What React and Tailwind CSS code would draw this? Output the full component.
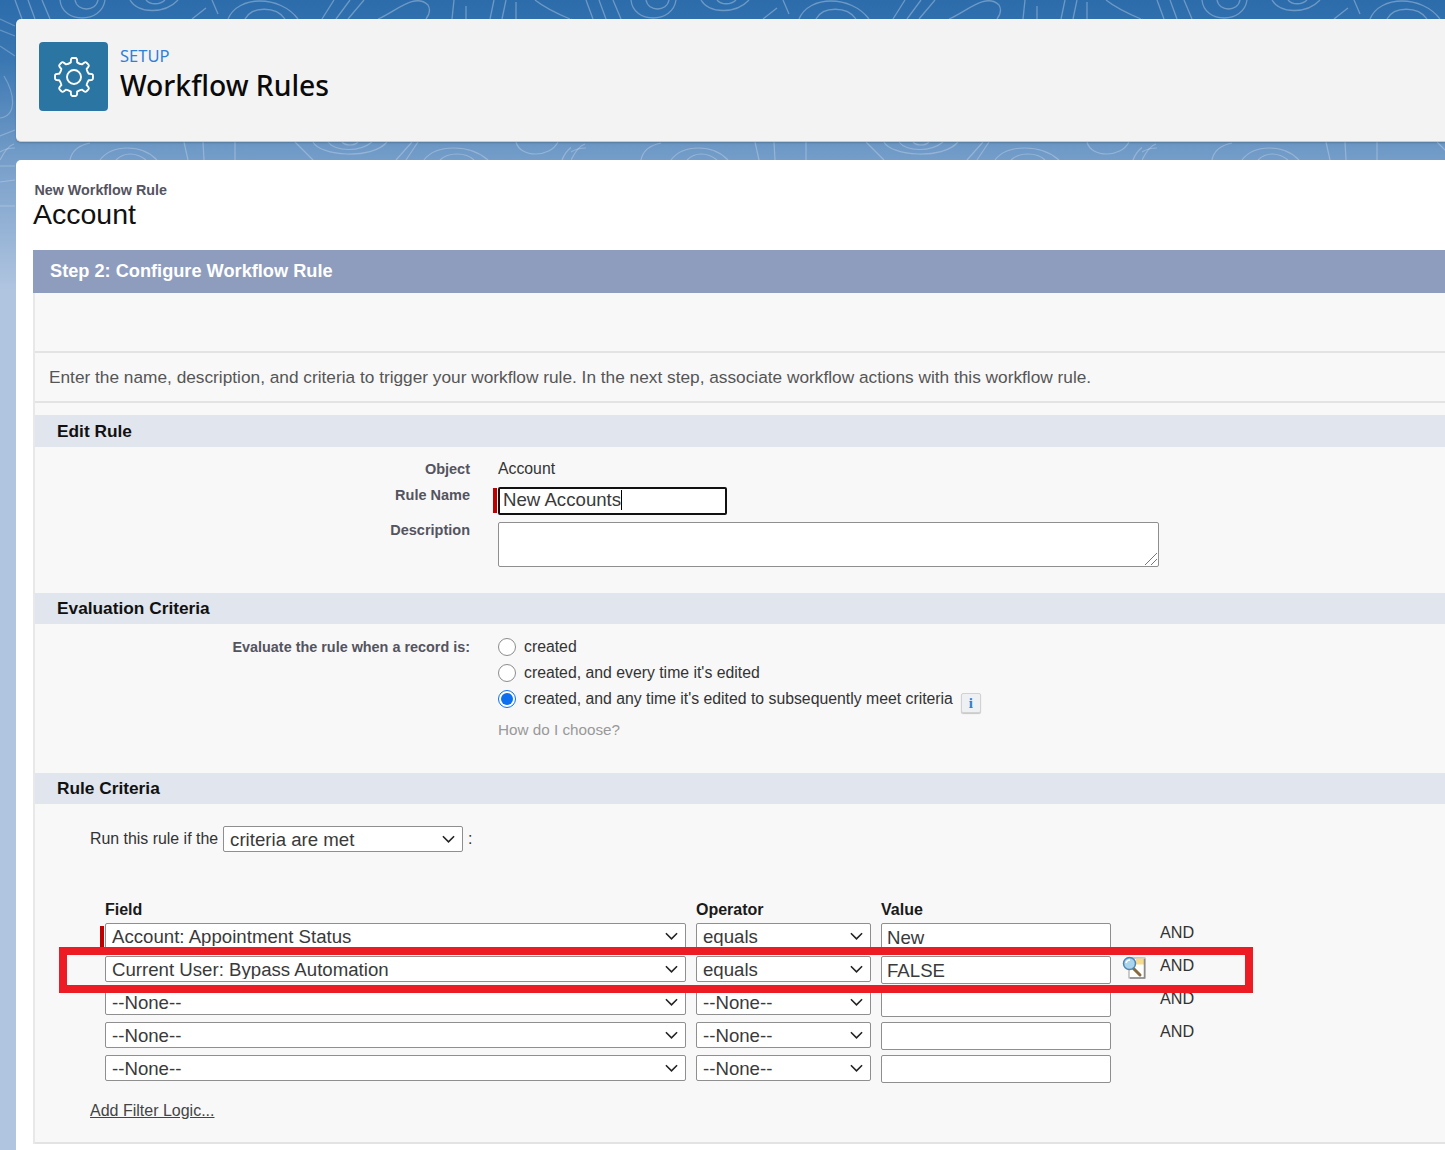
import React from "react";

const arial = "font-['Liberation_Sans',Arial,sans-serif]";

function Swirl() {
  return (
    <svg className="absolute inset-0 h-full w-full" aria-hidden="true">
      <defs>
        <pattern id="swirl" width="571" height="1200" patternUnits="userSpaceOnUse">
          <g fill="none" stroke="#ffffff" strokeOpacity="0.3" strokeWidth="1.3">
            <path d="M15 0 L22 19 M28 0 L35 19 M42 0 L50 19" />
            <path d="M60 0 C62 24 102 24 105 0 M75 0 C77 12 96 12 98 0" />
            <path d="M130 0 C138 14 165 14 178 0 M146 0 C150 5 160 5 165 0" />
            <path d="M192 19 L206 8 M212 0 L218 14" />
            <path d="M228 19 C238 -5 280 -5 298 19 M245 19 C252 6 276 6 285 19" />
            <path d="M322 19 L334 0 M336 19 L350 0 M348 19 L364 0" />
            <path d="M378 19 C395 12 415 -8 428 5 C431 10 429 15 426 19" />
            <path d="M452 19 L454 0 M466 19 L466 6 M490 19 L494 0 M502 19 L506 0 M516 19 L516 2" />
            <path d="M535 0 C545 8 558 14 570 19" />
          </g>
          <g transform="translate(0 142)" fill="none" stroke="#ffffff" strokeOpacity="0.25" strokeWidth="1.2">
            <path d="M70 18 C72 8 80 3 90 1" />
            <path d="M100 18 C112 2 142 2 157 18 M116 18 C124 10 136 10 146 18" />
            <path d="M184 0 L188 18 M203 0 L204 18 M235 0 L235 18" />
            <path d="M295 0 L313 18" />
            <path d="M313 0 C320 14 372 18 387 0 M328 0 C336 10 360 10 372 0 M342 0 C346 4 354 4 358 0" />
            <path d="M396 18 L412 0 M406 18 L418 0" />
            <path d="M424 18 C436 2 470 2 488 18 M440 18 C448 10 466 10 474 18" />
            <path d="M516 0 C520 16 550 16 558 0" />
            <path d="M562 18 C566 8 572 3 580 2" />
            <path d="M0 18 C4 10 8 4 14 2" />
          </g>
          <g fill="none" stroke="#ffffff" strokeOpacity="0.24" strokeWidth="1.2">
            <path d="M0 19 L15 26 M0 30 L15 36 M0 46 L15 56 M4 76 C16 96 16 116 0 118 M0 136 L15 130 M0 152 C6 148 12 148 15 148 M0 166 L15 166 M0 182 L15 180 M0 206 L15 206" />
          </g>
        </pattern>
      </defs>
      <rect width="100%" height="100%" fill="url(#swirl)" />
    </svg>
  );
}

function gearPath() {
  const cx = 22;
  const cy = 22;
  const rOut = 19;
  const rIn = 15;
  const teeth = 8;
  const pts = [];
  for (let i = 0; i < teeth; i++) {
    const a = (i * 2 * Math.PI) / teeth - Math.PI / 2;
    const s = (2 * Math.PI) / teeth;
    const p = (r, o) => `${(cx + r * Math.cos(a + o)).toFixed(2)} ${(cy + r * Math.sin(a + o)).toFixed(2)}`;
    const cmd = i === 0 ? "M" : "L";
    pts.push(`${cmd}${p(rIn, -s * 0.27)}`);
    pts.push(`Q${p(rOut + 0.6, -s * 0.22)} ${p(rOut, -s * 0.08)}`);
    pts.push(`L${p(rOut, s * 0.08)}`);
    pts.push(`Q${p(rOut + 0.6, s * 0.22)} ${p(rIn, s * 0.27)}`);
    pts.push(`Q${p(rIn - 0.8, s * 0.5)} ${p(rIn, s * 0.73)}`);
  }
  return pts.join(" ") + " Z";
}

function Gear() {
  return (
    <svg viewBox="0 0 44 44" className="h-[44px] w-[44px]" fill="none" stroke="#ffffff" strokeWidth="1.9" strokeLinejoin="round" strokeLinecap="round">
      <circle cx="22" cy="22" r="7" />
      <path d={gearPath()} />
    </svg>
  );
}

function Lookup() {
  return (
    <svg viewBox="0 0 24 24" className="h-[24px] w-[24px]">
      <rect x="7" y="3" width="16" height="20" fill="#ffffff" stroke="#9a9a9a" />
      <rect x="14" y="3.5" width="8.5" height="6" fill="#f6dc8c" />
      <path d="M22.5 4 V23 H8" fill="none" stroke="#8a8a8a" strokeWidth="1.5" />
      <path d="M11 13 L18 20" stroke="#8a6a3c" strokeWidth="3" strokeLinecap="round" />
      <circle cx="7.5" cy="8.5" r="6" fill="#a9d4ee" stroke="#4d86b5" strokeWidth="1.5" />
      <path d="M4 8 C4.5 6 6 5 8 5" stroke="#ffffff" strokeWidth="1.5" fill="none" />
    </svg>
  );
}

function Select({ value, className }) {
  return (
    <div className={`relative ${className}`}>
      <select
        defaultValue={value}
        className={`h-full w-full appearance-none rounded-[2px] border border-[#8f8f8f] bg-white pl-[6px] pt-[2px] text-[18.65px] leading-none text-[#3a3a3a] ${arial}`}
      >
        <option>{value}</option>
      </select>
      <svg viewBox="0 0 14 8" className="pointer-events-none absolute right-[8px] top-[9px] h-[8px] w-[13px]" fill="none" stroke="#222222" strokeWidth="1.7">
        <path d="M1 1 L7 7 L13 1" />
      </svg>
    </div>
  );
}

function Radio({ checked }) {
  return (
    <span className={`flex h-[18px] w-[18px] shrink-0 items-center justify-center rounded-full border bg-white ${checked ? "border-[#0b6ff0]" : "border-[#8c8c8c]"}`}>
      {checked && <span className="h-[12px] w-[12px] rounded-full bg-[#0b6ff0]" />}
    </span>
  );
}

function Section({ children, tall }) {
  return (
    <div className={`flex items-center bg-[#e1e5ee] pl-[22px] text-[17.3px] font-bold text-[#111111] ${tall ? "h-[32px] pt-[1px]" : "h-[31px]"} ${arial}`}>
      {children}
    </div>
  );
}

function Row({ field, op, value, required, lookup, and, mt }) {
  return (
    <div className={`relative flex items-start ${mt}`}>
      {required && <span className="absolute left-[-5px] top-[3px] h-[22px] w-[4px] bg-[#c00000]" />}
      <Select value={field} className="h-[26px] w-[581px]" />
      <Select value={op} className="ml-[10px] h-[26px] w-[175px]" />
      <input
        readOnly
        value={value}
        className={`ml-[10px] h-[28px] w-[230px] rounded-[2px] border border-[#8f8f8f] bg-white px-[5px] pt-[2px] text-[18.65px] leading-none text-[#3a3a3a] ${arial}`}
      />
      <span className="ml-[11px] mt-[-1px] w-[25px]">{lookup && <Lookup />}</span>
      {and && <span className={`ml-[13px] mt-[-3px] text-[16.2px] leading-[24px] text-[#333333] ${arial}`}>AND</span>}
    </div>
  );
}

export default function App() {
  return (
    <div className="relative h-[1150px] overflow-hidden bg-[linear-gradient(180deg,#2c6cab_0px,#3a77b2_60px,#7ba1cb_170px,#b0c5e0_290px,#b0c5e0_1150px)]">
      <Swirl />
      <div className="relative pl-[16px] pt-[19px]">
        <header className="flex h-[123px] items-start rounded-l-[5px] border-b border-[#c9c9c9] bg-[#f3f3f3] pl-[23px] pt-[23px] shadow-[0_1px_2px_rgba(0,0,0,0.2)]">
          <div className="flex h-[69px] w-[69px] items-center justify-center rounded-[4px] bg-[#2b75a3]">
            <Gear />
          </div>
          <div className="ml-[12px] font-['Noto_Sans',sans-serif]">
            <div className="mt-[3px] text-[16.5px] leading-[22px] text-[#2f80d8]">SETUP</div>
            <h1 className="mt-[-1px] text-[28.3px] font-medium leading-[38px] text-[#0a0a0a]">Workflow Rules</h1>
          </div>
        </header>

        <main className="mt-[18px] h-[990px] rounded-tl-[5px] bg-white pl-[17px] pt-[22px]">
          <div className={`pl-[1.5px] text-[14.3px] font-bold leading-[17px] text-[#54545f] ${arial}`}>New Workflow Rule</div>
          <div className={`text-[28.5px] leading-[31px] text-[#111111] ${arial}`}>Account</div>

          <section className="mt-[20px] border-l-2 border-[#e8e8e8] bg-[#f8f8f8]">
            <div className={`ml-[-2px] flex h-[43px] items-center bg-[#8e9dbe] pl-[17px] text-[18.2px] font-bold text-white ${arial}`}>
              Step 2: Configure Workflow Rule
            </div>
            <div className="h-[60px] border-b-2 border-[#e3e3e3]" />
            <div className={`flex h-[50px] items-center border-b-2 border-[#e3e3e3] pl-[14px] pt-[1px] text-[17.27px] text-[#555555] ${arial}`}>
              Enter the name, description, and criteria to trigger your workflow rule. In the next step, associate workflow actions with this workflow rule.
            </div>

            <div className="mt-[12px]">
              <Section tall>Edit Rule</Section>
            </div>

            <div className={`text-[14.5px] ${arial}`}>
              <div className="flex h-[40px] pt-[13px]">
                <div className="w-[435px] text-right font-bold leading-[18px] text-[#54545f]">Object</div>
                <div className="ml-[28px] text-[15.8px] leading-[18px] text-[#333333]">Account</div>
              </div>
              <div className="flex h-[35px]">
                <div className="w-[435px] pt-[1px] text-right font-bold leading-[14px] text-[#54545f]">Rule Name</div>
                <div className="relative ml-[28px]">
                  <span className="absolute left-[-5px] top-[1px] h-[25px] w-[4px] bg-[#c00000]" />
                  <div className="flex h-[28px] w-[229px] items-center rounded-[2px] border-2 border-[#111111] bg-white pb-[3px] pl-[3px] text-[18.65px] text-[#3a3a3a]">
                    <span>New Accounts</span>
                    <span className="h-[20px] w-px bg-black" />
                  </div>
                </div>
              </div>
              <div className="flex h-[71px]">
                <div className="w-[435px] pt-[1px] text-right font-bold leading-[14px] text-[#54545f]">Description</div>
                <div className="relative ml-[28px] h-[45px]">
                  <textarea readOnly className="block h-[45px] w-[661px] resize-none rounded-[2px] border border-[#8f8f8f] bg-white" />
                  <svg viewBox="0 0 14 14" className="pointer-events-none absolute bottom-[1px] right-[1px] h-[14px] w-[14px]" fill="none" stroke="#777777" strokeWidth="1">
                    <path d="M1 13 L13 1 M7 13 L13 7" />
                  </svg>
                </div>
              </div>
            </div>

            <Section>Evaluation Criteria</Section>

            <div className={`flex h-[149px] pt-[12px] ${arial}`}>
              <div className="w-[435px] pt-[2px] text-right text-[14.4px] font-bold leading-[18px] text-[#54545f]">
                Evaluate the rule when a record is:
              </div>
              <div className="ml-[28px] pt-[1px] text-[15.8px] text-[#333333]">
                <div className="flex h-[26px] items-start gap-[8px] pt-[1px]"><Radio /><span className="leading-[18px]">created</span></div>
                <div className="flex h-[26px] items-start gap-[8px] pt-[1px]"><Radio /><span className="leading-[18px]">created, and every time it's edited</span></div>
                <div className="flex h-[26px] items-start gap-[8px] pt-[1px]">
                  <Radio checked />
                  <span className="leading-[18px]">created, and any time it's edited to subsequently meet criteria</span>
                  <span className="ml-0 mt-[3px] flex h-[20px] w-[20px] items-center justify-center rounded-[2px] border border-[#d2d2d2] bg-[#eef1f4] font-['Liberation_Serif',serif] text-[15px] font-bold leading-none text-[#2f7fd0] shadow-[0_1px_1px_rgba(0,0,0,0.2)]">i</span>
                </div>
                <div className="mt-[6px] text-[15.25px] leading-[18px] text-[#999999]">How do I choose?</div>
              </div>
            </div>

            <Section>Rule Criteria</Section>

            <div className={`flex h-[72px] items-start pl-[55px] pt-[22px] text-[15.9px] text-[#333333] ${arial}`}>
              <span className="mt-[3px] leading-[20px]">Run this rule if the</span>
              <Select value="criteria are met" className="ml-[5px] h-[26px] w-[240px]" />
              <span className="ml-[5px] mt-[3px] leading-[20px]">:</span>
            </div>

            <div className="pl-[70px]">
              <div className={`flex h-[47px] items-end pb-[4px] text-[16px] font-bold leading-[18px] text-[#1a1a1a] ${arial}`}>
                <span className="w-[591px]">Field</span>
                <span className="w-[185px]">Operator</span>
                <span>Value</span>
              </div>
              <Row field="Account: Appointment Status" op="equals" value="New" required and />
              <Row field="Current User: Bypass Automation" op="equals" value="FALSE" lookup and mt="mt-[5px]" />
              <Row field="--None--" op="--None--" value="" and mt="mt-[5px]" />
              <Row field="--None--" op="--None--" value="" and mt="mt-[5px]" />
              <Row field="--None--" op="--None--" value="" mt="mt-[5px]" />
            </div>

            <div className={`mt-[18px] pl-[55px] text-[16px] leading-[20px] text-[#444444] underline ${arial}`}>Add Filter Logic...</div>
            <div className="mt-[21px] border-t-2 border-[#e3e3e3]" />
          </section>
        </main>
      </div>

      <div className="absolute left-[59px] top-[947px] h-[46px] w-[1194px] border-[8px] border-[#ed1c24]" />
    </div>
  );
}
